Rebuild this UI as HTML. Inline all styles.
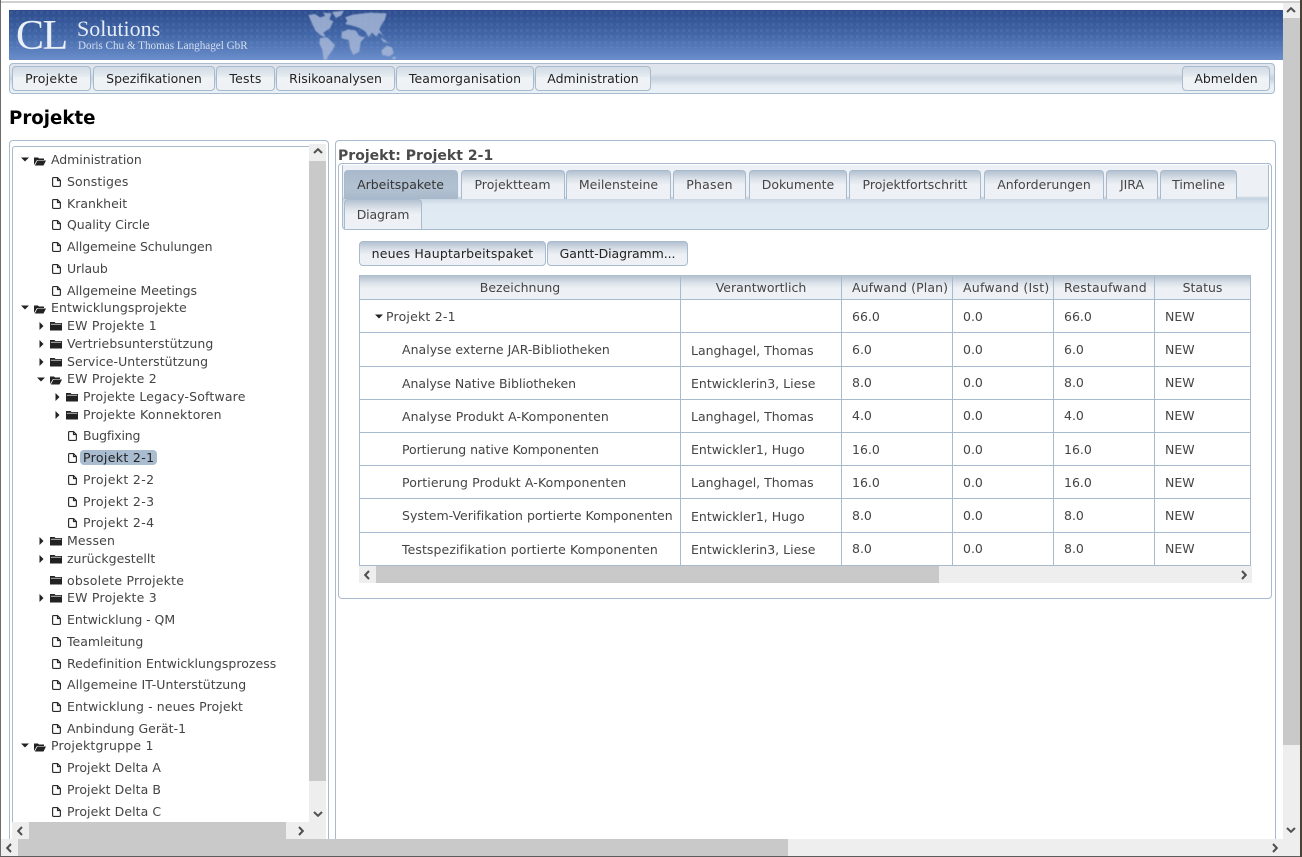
<!DOCTYPE html>
<html><head><meta charset="utf-8"><title>Projekte</title>
<style>
html,body{margin:0;padding:0;background:#fff;overflow:hidden}
body{position:relative;width:1302px;height:857px;font-family:"DejaVu Sans",sans-serif;font-size:12.5px;color:#444}
.a,.t,.b,.tab,.c,svg{position:absolute}
.t{height:16px;line-height:16px;white-space:nowrap;margin-top:1px}
.b{box-sizing:border-box;height:25px;line-height:23px;text-align:center;color:#222;border:1px solid #a8bacd;border-radius:4px;background:linear-gradient(#d3dbe5 0,#dbe3eb 25%,#eff3f6 50%,#eef2f5 100%);white-space:nowrap}
.tab{box-sizing:border-box;top:170px;height:29px;line-height:28px;text-align:center;border:1px solid #a8bacd;border-bottom:0;border-radius:4px 4px 0 0;background:linear-gradient(#b3c1d1 0,#dde3ea 30%,#edf1f5 50%,#edf1f5 100%);white-space:nowrap}
.c{height:16px;line-height:16px;white-space:nowrap;margin-top:1px}
.l{position:absolute;background:#a8bacd}
</style></head><body>
<svg width="0" height="0" style="position:absolute">
<defs>
<symbol id="doc" viewBox="0 0 9 10"><path d="M1.5.6H5.5L8.4 3.5V8.2Q8.4 9.4 7.2 9.4H1.8Q.6 9.4 .6 8.2V1.5Q.6.6 1.5.6ZM5.5.6V3.5H8.4" fill="#fff" stroke="#2a2a2a" stroke-width="1.15"/></symbol>
<symbol id="fo" viewBox="0 0 12 10"><path d="M0 9V1.5H4L5 2.5H10V4H3L0 9ZM3.5 4.5H12L9.5 9.5H.8Z" fill="#222"/></symbol>
<symbol id="fc" viewBox="0 0 12 10"><path d="M0 9.5V1H4.5L5.5 2H12V9.5Z" fill="#222"/><path d="M.8 3.2H11.2" stroke="#fff" stroke-width=".7"/></symbol>
<symbol id="cd" viewBox="0 0 8 5"><path d="M0 .5H8L4 4.5Z" fill="#222"/></symbol>
<symbol id="cr" viewBox="0 0 5 8"><path d="M.5 0V8L4.5 4Z" fill="#222"/></symbol>
<symbol id="up" viewBox="0 0 10 6"><path d="M1 5L5 1.2L9 5" fill="none" stroke="#505050" stroke-width="2"/></symbol>
<symbol id="dn" viewBox="0 0 10 6"><path d="M1 1L5 4.8L9 1" fill="none" stroke="#505050" stroke-width="2"/></symbol>
<symbol id="lf" viewBox="0 0 6 10"><path d="M5 1L1.2 5L5 9" fill="none" stroke="#505050" stroke-width="2"/></symbol>
<symbol id="rt" viewBox="0 0 6 10"><path d="M1 1L4.8 5L1 9" fill="none" stroke="#505050" stroke-width="2"/></symbol>
<pattern id="dots" width="6" height="6" patternUnits="userSpaceOnUse"><rect x="1" y="1" width="3" height="3" fill="#fff" opacity=".05"/></pattern>
</defs></svg>

<!-- window frame -->
<div class="a" style="left:0;top:1px;width:1302px;height:2px;background:#d0d0d0"></div>
<div class="a" style="left:0;top:0;width:1px;height:857px;background:#6d6d6d"></div>
<div class="a" style="left:0;top:856px;width:1302px;height:1px;background:#5c5c5c"></div>
<div class="a" style="left:1300px;top:0;width:2px;height:857px;background:#4a4034"></div>

<!-- banner -->
<div class="a" style="left:9px;top:10px;width:1274px;height:50px;background:linear-gradient(#2d4c8d,#4267a8 50%,#6b8ecb)"></div>
<svg style="left:9px;top:10px" width="1274" height="50"><rect width="1274" height="38" fill="url(#dots)"/>
<g transform="translate(261,-10) scale(.33333)" style="filter:blur(1.2px)">
<g fill="#a9b9d8" opacity=".82">
<path d="M115 45L135 42L150 52L165 48L160 38L185 40L178 58L190 64L180 85L160 98L168 112L152 106L136 92L126 70Z"/>
<path d="M186 36L222 32L214 46L198 54Z"/>
<path d="M150 114L172 112L195 135L188 150L175 168L170 180L161 180L157 150L148 130Z"/>
<path d="M225 52L248 44L300 38L350 40L345 58L335 74L328 88L340 108L328 98L318 110L306 98L296 112L286 94L268 84L250 78L226 72L232 62Z"/>
<path d="M215 96L235 88L258 92L268 108L285 112L272 126L268 155L250 165L240 145L236 120L215 115Z"/>
<path d="M334 152L350 137L366 142L371 160L358 169L337 165Z"/>
<path d="M330 112L345 120L356 130L340 125Z"/>
<path d="M365 172L380 170L372 180Z"/>
</g></g></svg>
<div class="a" style="left:16px;top:11px;font:42px/50px 'Liberation Serif',serif;color:#eaf0f8;letter-spacing:-1.5px">CL</div>
<div class="a" style="left:77px;top:18px;font:22px/22px 'Liberation Serif',serif;color:#e6ecf6">Solutions</div>
<div class="a" style="left:78px;top:39px;font:11.15px/14px 'Liberation Serif',serif;color:#d5dff0;white-space:nowrap">Doris Chu &amp; Thomas Langhagel GbR</div>

<!-- menu -->
<div class="a" style="box-sizing:border-box;left:9px;top:63px;width:1266px;height:31px;border:1px solid #a8bacd;border-radius:4px;background:linear-gradient(#e0e5ed 0,#dfe5ec 30%,#c7d3df 50%,#e7eef4 75%,#e9f0f6 100%)"></div>
<div class="b" style="left:12px;top:66px;width:79px;letter-spacing:.25px">Projekte</div>
<div class="b" style="left:93px;top:66px;width:122px">Spezifikationen</div>
<div class="b" style="left:216px;top:66px;width:59px;letter-spacing:.2px">Tests</div>
<div class="b" style="left:276px;top:66px;width:119px">Risikoanalysen</div>
<div class="b" style="left:396px;top:66px;width:138px;letter-spacing:.1px">Teamorganisation</div>
<div class="b" style="left:535px;top:66px;width:116px">Administration</div>
<div class="b" style="left:1182px;top:66px;width:88px">Abmelden</div>

<div class="a" style="left:9px;top:107px;font-weight:bold;font-size:18.2px;line-height:24px;color:#000">Projekte</div>

<!-- left panel -->
<div class="a" style="box-sizing:border-box;left:9px;top:140px;width:320px;height:700px;border:1px solid #a8bacd;border-bottom:0;border-radius:4px 4px 0 0"></div>
<div class="a" style="box-sizing:border-box;left:12px;top:146px;width:298px;height:680px;border:1px solid #a8bacd;border-width:1px 0 0 1px;border-radius:3px 0 0 0"></div>
<div class="a" style="left:309px;top:144px;width:17px;height:678px;background:#eee"></div>
<div class="a" style="left:309px;top:161px;width:17px;height:620px;background:#c9c9c9"></div>
<svg style="left:313px;top:148px" width="10" height="6"><use href="#up"/></svg>
<svg style="left:313px;top:811px" width="10" height="6"><use href="#dn"/></svg>
<div class="a" style="left:12px;top:822px;width:314px;height:17px;background:#eee"></div>
<div class="a" style="left:29px;top:822px;width:257px;height:17px;background:#c9c9c9"></div>
<svg style="left:17px;top:826px" width="6" height="10"><use href="#lf"/></svg>
<svg style="left:298px;top:826px" width="6" height="10"><use href="#rt"/></svg>

<!-- tree -->
<svg style="left:21px;top:157px" width="8" height="5"><use href="#cd"/></svg><svg style="left:34px;top:156px" width="12" height="10"><use href="#fo"/></svg><div class="t" style="left:51px;top:151px;letter-spacing:-.05px">Administration</div>
<svg style="left:52px;top:177px" width="9" height="10"><use href="#doc"/></svg><div class="t" style="left:67px;top:173px;letter-spacing:.1px">Sonstiges</div>
<svg style="left:52px;top:199px" width="9" height="10"><use href="#doc"/></svg><div class="t" style="left:67px;top:195px">Krankheit</div>
<svg style="left:52px;top:220px" width="9" height="10"><use href="#doc"/></svg><div class="t" style="left:67px;top:216px;letter-spacing:-.07px">Quality Circle</div>
<svg style="left:52px;top:242px" width="9" height="10"><use href="#doc"/></svg><div class="t" style="left:67px;top:238px;letter-spacing:-.1px">Allgemeine Schulungen</div>
<svg style="left:52px;top:264px" width="9" height="10"><use href="#doc"/></svg><div class="t" style="left:67px;top:260px;letter-spacing:-.1px">Urlaub</div>
<svg style="left:52px;top:286px" width="9" height="10"><use href="#doc"/></svg><div class="t" style="left:67px;top:282px;letter-spacing:-.05px">Allgemeine Meetings</div>
<svg style="left:21px;top:305px" width="8" height="5"><use href="#cd"/></svg><svg style="left:34px;top:304px" width="12" height="10"><use href="#fo"/></svg><div class="t" style="left:51px;top:299px;letter-spacing:.1px">Entwicklungsprojekte</div>
<svg style="left:39px;top:322px" width="5" height="8"><use href="#cr"/></svg><svg style="left:50px;top:321px" width="12" height="10"><use href="#fc"/></svg><div class="t" style="left:67px;top:317px;letter-spacing:.23px">EW Projekte 1</div>
<svg style="left:39px;top:340px" width="5" height="8"><use href="#cr"/></svg><svg style="left:50px;top:339px" width="12" height="10"><use href="#fc"/></svg><div class="t" style="left:67px;top:335px;letter-spacing:.1px">Vertriebsunterstützung</div>
<svg style="left:39px;top:358px" width="5" height="8"><use href="#cr"/></svg><svg style="left:50px;top:357px" width="12" height="10"><use href="#fc"/></svg><div class="t" style="left:67px;top:353px;letter-spacing:.05px">Service-Unterstützung</div>
<svg style="left:37px;top:377px" width="8" height="5"><use href="#cd"/></svg><svg style="left:50px;top:375px" width="12" height="10"><use href="#fo"/></svg><div class="t" style="left:67px;top:370px;letter-spacing:.23px">EW Projekte 2</div>
<svg style="left:55px;top:393px" width="5" height="8"><use href="#cr"/></svg><svg style="left:66px;top:392px" width="12" height="10"><use href="#fc"/></svg><div class="t" style="left:83px;top:388px;letter-spacing:.17px">Projekte Legacy-Software</div>
<svg style="left:55px;top:411px" width="5" height="8"><use href="#cr"/></svg><svg style="left:66px;top:410px" width="12" height="10"><use href="#fc"/></svg><div class="t" style="left:83px;top:406px;letter-spacing:.25px">Projekte Konnektoren</div>
<svg style="left:68px;top:431px" width="9" height="10"><use href="#doc"/></svg><div class="t" style="left:83px;top:427px;letter-spacing:-.2px">Bugfixing</div>
<svg style="left:68px;top:453px" width="9" height="10"><use href="#doc"/></svg><div class="a" style="left:80px;top:450px;width:77px;height:15px;background:#a9bcd0;border-radius:4px"></div><div class="t" style="left:83px;top:449px;color:#222;letter-spacing:.35px">Projekt 2-1</div>
<svg style="left:68px;top:475px" width="9" height="10"><use href="#doc"/></svg><div class="t" style="left:83px;top:471px;letter-spacing:.35px">Projekt 2-2</div>
<svg style="left:68px;top:497px" width="9" height="10"><use href="#doc"/></svg><div class="t" style="left:83px;top:493px;letter-spacing:.35px">Projekt 2-3</div>
<svg style="left:68px;top:518px" width="9" height="10"><use href="#doc"/></svg><div class="t" style="left:83px;top:514px;letter-spacing:.35px">Projekt 2-4</div>
<svg style="left:39px;top:537px" width="5" height="8"><use href="#cr"/></svg><svg style="left:50px;top:536px" width="12" height="10"><use href="#fc"/></svg><div class="t" style="left:67px;top:532px;letter-spacing:.15px">Messen</div>
<svg style="left:39px;top:555px" width="5" height="8"><use href="#cr"/></svg><svg style="left:50px;top:554px" width="12" height="10"><use href="#fc"/></svg><div class="t" style="left:67px;top:550px">zurückgestellt</div>
<svg style="left:50px;top:575px" width="12" height="10"><use href="#fc"/></svg><div class="t" style="left:67px;top:572px;letter-spacing:.22px">obsolete Prrojekte</div>
<svg style="left:39px;top:594px" width="5" height="8"><use href="#cr"/></svg><svg style="left:50px;top:593px" width="12" height="10"><use href="#fc"/></svg><div class="t" style="left:67px;top:589px;letter-spacing:.23px">EW Projekte 3</div>
<svg style="left:52px;top:615px" width="9" height="10"><use href="#doc"/></svg><div class="t" style="left:67px;top:611px;letter-spacing:-.05px">Entwicklung - QM</div>
<svg style="left:52px;top:637px" width="9" height="10"><use href="#doc"/></svg><div class="t" style="left:67px;top:633px">Teamleitung</div>
<svg style="left:52px;top:659px" width="9" height="10"><use href="#doc"/></svg><div class="t" style="left:67px;top:655px;letter-spacing:.02px">Redefinition Entwicklungsprozess</div>
<svg style="left:52px;top:680px" width="9" height="10"><use href="#doc"/></svg><div class="t" style="left:67px;top:676px;letter-spacing:.04px">Allgemeine IT-Unterstützung</div>
<svg style="left:52px;top:702px" width="9" height="10"><use href="#doc"/></svg><div class="t" style="left:67px;top:698px;letter-spacing:.11px">Entwicklung - neues Projekt</div>
<svg style="left:52px;top:724px" width="9" height="10"><use href="#doc"/></svg><div class="t" style="left:67px;top:720px">Anbindung Gerät-1</div>
<svg style="left:21px;top:743px" width="8" height="5"><use href="#cd"/></svg><svg style="left:34px;top:742px" width="12" height="10"><use href="#fo"/></svg><div class="t" style="left:51px;top:737px;letter-spacing:.2px">Projektgruppe 1</div>
<svg style="left:52px;top:763px" width="9" height="10"><use href="#doc"/></svg><div class="t" style="left:67px;top:759px;letter-spacing:.07px">Projekt Delta A</div>
<svg style="left:52px;top:785px" width="9" height="10"><use href="#doc"/></svg><div class="t" style="left:67px;top:781px;letter-spacing:.07px">Projekt Delta B</div>
<svg style="left:52px;top:807px" width="9" height="10"><use href="#doc"/></svg><div class="t" style="left:67px;top:803px;letter-spacing:.07px">Projekt Delta C</div>

<!-- right panel -->
<div class="a" style="box-sizing:border-box;left:335px;top:140px;width:941px;height:700px;border:1px solid #a8bacd;border-bottom:0;border-radius:4px 4px 0 0"></div>
<div class="a" style="left:338px;top:147px;font-weight:bold;font-size:14px;line-height:18px;color:#4a4a4a;white-space:nowrap;letter-spacing:.02px">Projekt: Projekt 2-1</div>
<div class="a" style="box-sizing:border-box;left:338px;top:163px;width:934px;height:436px;border:1px solid #a8bacd;border-radius:4px"></div>
<div class="a" style="box-sizing:border-box;left:342px;top:165px;width:927px;height:65px;border:1px solid #a8bacd;border-width:0 1px 1px 1px;border-radius:0 0 4px 4px;background:linear-gradient(#edf0f4 0,#edf0f4 48%,#c5d2df 52%,#dfe9f2 62%,#e0eaf3 100%)"></div>

<div class="tab" style="left:344px;width:114px;background:linear-gradient(#a9b9cb,#b3c2d2 60%,#a7b8ca);color:#333;text-indent:-1px">Arbeitspakete</div>
<div class="tab" style="left:461px;width:104px;letter-spacing:.05px;text-indent:-1px">Projektteam</div>
<div class="tab" style="left:566px;width:105px">Meilensteine</div>
<div class="tab" style="left:673px;width:73px;letter-spacing:.2px">Phasen</div>
<div class="tab" style="left:749px;width:98px">Dokumente</div>
<div class="tab" style="left:849px;width:132px">Projektfortschritt</div>
<div class="tab" style="left:984px;width:120px">Anforderungen</div>
<div class="tab" style="left:1106px;width:52px">JIRA</div>
<div class="tab" style="left:1160px;width:77px;letter-spacing:-.05px">Timeline</div>
<div class="tab" style="left:344px;top:199px;width:78px;height:30px;line-height:30px;letter-spacing:-.15px">Diagram</div>

<div class="b" style="left:359px;top:241px;width:187px;letter-spacing:.17px;background:linear-gradient(#b3c1d1 0,#dde3ea 35%,#edf1f5 55%,#edf1f5 100%)">neues Hauptarbeitspaket</div>
<div class="b" style="left:547px;top:241px;width:141px;letter-spacing:-.1px;background:linear-gradient(#b3c1d1 0,#dde3ea 35%,#edf1f5 55%,#edf1f5 100%)">Gantt-Diagramm...</div>

<!-- table -->
<div class="a" style="left:359px;top:275px;width:892px;height:24px;background:linear-gradient(#aebdcd 0,#dde3ea 35%,#edf1f5 55%,#edf1f5 100%)"></div>
<div class="l" style="left:359px;top:275px;width:1px;height:291px"></div>
<div class="l" style="left:680px;top:276px;width:1px;height:290px"></div>
<div class="l" style="left:841px;top:276px;width:1px;height:290px"></div>
<div class="l" style="left:952px;top:276px;width:1px;height:290px"></div>
<div class="l" style="left:1053px;top:276px;width:1px;height:290px"></div>
<div class="l" style="left:1154px;top:276px;width:1px;height:290px"></div>
<div class="l" style="left:1250px;top:276px;width:1px;height:290px"></div>
<div class="l" style="left:359px;top:299px;width:892px;height:1px"></div>
<div class="l" style="left:359px;top:332px;width:892px;height:1px"></div>
<div class="l" style="left:359px;top:366px;width:892px;height:1px"></div>
<div class="l" style="left:359px;top:399px;width:892px;height:1px"></div>
<div class="l" style="left:359px;top:432px;width:892px;height:1px"></div>
<div class="l" style="left:359px;top:465px;width:892px;height:1px"></div>
<div class="l" style="left:359px;top:498px;width:892px;height:1px"></div>
<div class="l" style="left:359px;top:532px;width:892px;height:1px"></div>
<div class="l" style="left:359px;top:565px;width:892px;height:1px"></div>

<div class="c" style="left:360px;width:320px;text-align:center;top:279px">Bezeichnung</div>
<div class="c" style="left:681px;width:160px;text-align:center;top:279px">Verantwortlich</div>
<div class="c" style="left:852px;top:279px;letter-spacing:.1px">Aufwand (Plan)</div>
<div class="c" style="left:963px;top:279px;letter-spacing:.25px">Aufwand (Ist)</div>
<div class="c" style="left:1064px;top:279px;letter-spacing:.2px">Restaufwand</div>
<div class="c" style="left:1155px;width:95px;text-align:center;top:279px">Status</div>

<svg style="left:375px;top:314px" width="8" height="5"><use href="#cd"/></svg>
<div class="c" style="left:386px;top:308px;letter-spacing:.2px">Projekt 2-1</div><div class="c" style="left:852px;top:308px">66.0</div><div class="c" style="left:963px;top:308px">0.0</div><div class="c" style="left:1064px;top:308px">66.0</div><div class="c" style="left:1165px;top:308px">NEW</div>

<div class="c" style="left:402px;top:341px;letter-spacing:.03px">Analyse externe JAR-Bibliotheken</div><div class="c" style="left:691px;top:342px">Langhagel, Thomas</div><div class="c" style="left:852px;top:341px">6.0</div><div class="c" style="left:963px;top:341px">0.0</div><div class="c" style="left:1064px;top:341px">6.0</div><div class="c" style="left:1165px;top:341px">NEW</div>

<div class="c" style="left:402px;top:375px;letter-spacing:-.04px">Analyse Native Bibliotheken</div><div class="c" style="left:691px;top:375px">Entwicklerin3, Liese</div><div class="c" style="left:852px;top:374px">8.0</div><div class="c" style="left:963px;top:374px">0.0</div><div class="c" style="left:1064px;top:374px">8.0</div><div class="c" style="left:1165px;top:374px">NEW</div>

<div class="c" style="left:402px;top:408px;letter-spacing:.07px">Analyse Produkt A-Komponenten</div><div class="c" style="left:691px;top:408px">Langhagel, Thomas</div><div class="c" style="left:852px;top:407px">4.0</div><div class="c" style="left:963px;top:407px">0.0</div><div class="c" style="left:1064px;top:407px">4.0</div><div class="c" style="left:1165px;top:407px">NEW</div>

<div class="c" style="left:402px;top:441px;letter-spacing:-.07px">Portierung native Komponenten</div><div class="c" style="left:691px;top:441px">Entwickler1, Hugo</div><div class="c" style="left:852px;top:441px">16.0</div><div class="c" style="left:963px;top:441px">0.0</div><div class="c" style="left:1064px;top:441px">16.0</div><div class="c" style="left:1165px;top:441px">NEW</div>

<div class="c" style="left:402px;top:474px;letter-spacing:.12px">Portierung Produkt A-Komponenten</div><div class="c" style="left:691px;top:474px">Langhagel, Thomas</div><div class="c" style="left:852px;top:474px">16.0</div><div class="c" style="left:963px;top:474px">0.0</div><div class="c" style="left:1064px;top:474px">16.0</div><div class="c" style="left:1165px;top:474px">NEW</div>

<div class="c" style="left:402px;top:507px;letter-spacing:.01px">System-Verifikation portierte Komponenten</div><div class="c" style="left:691px;top:508px">Entwickler1, Hugo</div><div class="c" style="left:852px;top:507px">8.0</div><div class="c" style="left:963px;top:507px">0.0</div><div class="c" style="left:1064px;top:507px">8.0</div><div class="c" style="left:1165px;top:507px">NEW</div>

<div class="c" style="left:402px;top:541px;letter-spacing:.08px">Testspezifikation portierte Komponenten</div><div class="c" style="left:691px;top:541px">Entwicklerin3, Liese</div><div class="c" style="left:852px;top:540px">8.0</div><div class="c" style="left:963px;top:540px">0.0</div><div class="c" style="left:1064px;top:540px">8.0</div><div class="c" style="left:1165px;top:540px">NEW</div>

<div class="a" style="left:359px;top:566px;width:893px;height:17px;background:#eee"></div>
<div class="a" style="left:376px;top:566px;width:563px;height:17px;background:#c9c9c9"></div>
<svg style="left:364px;top:570px" width="6" height="10"><use href="#lf"/></svg>
<svg style="left:1241px;top:570px" width="6" height="10"><use href="#rt"/></svg>

<!-- page scrollbars -->
<div class="a" style="left:1283px;top:3px;width:17px;height:836px;background:#eee"></div>
<div class="a" style="left:1283px;top:18px;width:17px;height:727px;background:#c9c9c9"></div>
<svg style="left:1286px;top:7px" width="10" height="6"><use href="#up"/></svg>
<svg style="left:1286px;top:827px" width="10" height="6"><use href="#dn"/></svg>
<div class="a" style="left:1px;top:839px;width:1299px;height:17px;background:#eee"></div>
<div class="a" style="left:18px;top:839px;width:770px;height:17px;background:#c9c9c9"></div>
<svg style="left:6px;top:843px" width="6" height="10"><use href="#lf"/></svg>
<svg style="left:1272px;top:843px" width="6" height="10"><use href="#rt"/></svg>
</body></html>
